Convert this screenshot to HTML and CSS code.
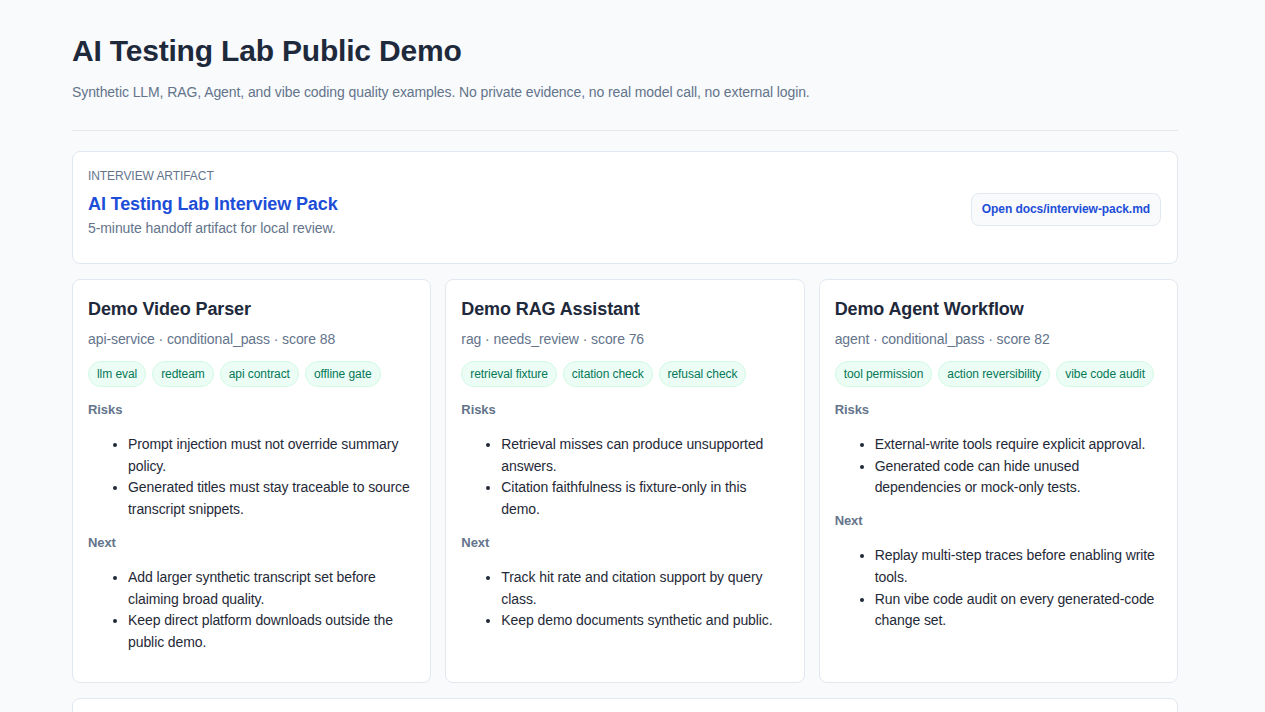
FILE: index.html
```html
<!DOCTYPE html>
<html lang="en">
<head>
<meta charset="utf-8" />
<title>AI Testing Lab Public Demo</title>
<meta name="viewport" content="width=device-width, initial-scale=1" />
<link rel="stylesheet" href="styles.css">
</head>
<body>
<main class="page">

<header class="intro">
    <h1>AI Testing Lab Public Demo</h1>
    <p class="lead">Synthetic LLM, RAG, Agent, and vibe coding quality examples. No private evidence, no real model call, no external login.</p>
</header>

<!-- artifact: -->
<section class="artifact">
    <div>
        <div class="eyebrow">INTERVIEW ARTIFACT</div>
        <a class="artifact-title" href="#">AI Testing Lab Interview Pack</a>
        <p class="artifact-desc">5-minute handoff artifact for local review.</p>
    </div>
    <a class="btn" href="#">Open docs/interview-pack.md</a>
</section>

<!-- demo cards: -->
<section class="cards">
    <article class="card">
        <h2>Demo Video Parser</h2>
        <p class="meta">api-service &middot; conditional_pass &middot; score 88</p>
        <div class="tags">
            <span class="tag">llm eval</span>
            <span class="tag">redteam</span>
            <span class="tag">api contract</span>
            <span class="tag">offline gate</span>
        </div>
        <h3>Risks</h3>
        <ul>
            <li>Prompt injection must not override summary policy.</li>
            <li>Generated titles must stay traceable to source transcript snippets.</li>
        </ul>
        <h3>Next</h3>
        <ul>
            <li>Add larger synthetic transcript set before claiming broad quality.</li>
            <li>Keep direct platform downloads outside the public demo.</li>
        </ul>
    </article>

    <article class="card">
        <h2>Demo RAG Assistant</h2>
        <p class="meta">rag &middot; needs_review &middot; score 76</p>
        <div class="tags">
            <span class="tag">retrieval fixture</span>
            <span class="tag">citation check</span>
            <span class="tag">refusal check</span>
        </div>
        <h3>Risks</h3>
        <ul>
            <li>Retrieval misses can produce unsupported answers.</li>
            <li>Citation faithfulness is fixture-only in this demo.</li>
        </ul>
        <h3>Next</h3>
        <ul>
            <li>Track hit rate and citation support by query class.</li>
            <li>Keep demo documents synthetic and public.</li>
        </ul>
    </article>

    <article class="card">
        <h2>Demo Agent Workflow</h2>
        <p class="meta">agent &middot; conditional_pass &middot; score 82</p>
        <div class="tags">
            <span class="tag">tool permission</span>
            <span class="tag">action reversibility</span>
            <span class="tag">vibe code audit</span>
        </div>
        <h3>Risks</h3>
        <ul>
            <li>External-write tools require explicit approval.</li>
            <li>Generated code can hide unused dependencies or mock-only tests.</li>
        </ul>
        <h3>Next</h3>
        <ul>
            <li>Replay multi-step traces before enabling write tools.</li>
            <li>Run vibe code audit on every generated-code change set.</li>
        </ul>
    </article>
</section>

<!-- gate summary: -->
<section class="panel">
    <h2>Release Gate Summary</h2>
    <p class="meta">All examples are synthetic and run offline.</p>
    <ul>
        <li>Demo Video Parser: conditional_pass</li>
        <li>Demo RAG Assistant: needs_review</li>
        <li>Demo Agent Workflow: conditional_pass</li>
    </ul>
</section>

</main>
</body>
</html>
```

FILE: styles.css
```css
html, body {
    margin: 0;
    background: #f8fafc;
    color: #1f2937;
    font-family: "Liberation Sans", Arial, sans-serif;
}
body {
    padding-right: 15px;
}

.page {
    max-width: 1106px;
    margin: 0 auto;
    padding: 33px 0 40px 0;
}

/* intro: */
.intro {
    border-bottom: 1px solid #e5e7eb;
    padding-bottom: 28px;
    margin-bottom: 20px;
}
.intro h1 {
    margin: 0;
    font-size: 30px;
    line-height: 36px;
    letter-spacing: -0.19px;
    color: #1e293b;
}
.lead {
    margin: 13px 0 0 0;
    font-size: 14px;
    line-height: 20px;
    letter-spacing: -0.085px;
    color: #64748b;
}

/* artifact: */
.artifact {
    display: flex;
    align-items: center;
    justify-content: space-between;
    background: #fff;
    border: 1px solid #e2e8f0;
    border-radius: 8px;
    padding: 16px 16px 16px 15px;
    margin-bottom: 15px;
}
.eyebrow {
    font-size: 12px;
    line-height: 16px;
    letter-spacing: -0.07px;
    color: #64748b;
}
.artifact-title {
    display: block;
    margin-top: 8px;
    font-size: 18px;
    line-height: 24px;
    letter-spacing: -0.11px;
    font-weight: bold;
    color: #1d4ed8;
    text-decoration: none;
}
.artifact-desc {
    margin: 2px 0 9px 0;
    font-size: 14px;
    line-height: 20px;
    letter-spacing: -0.085px;
    color: #64748b;
}
.btn {
    margin-top: 3px;
    padding: 8px 10px;
    font-size: 12px;
    line-height: 15px;
    letter-spacing: -0.07px;
    font-weight: bold;
    color: #1d4ed8;
    background: #f8fafc;
    border: 1px solid #e2e8f0;
    border-radius: 8px;
    text-decoration: none;
}

/* cards: */
.cards {
    display: grid;
    grid-template-columns: repeat(3, 1fr);
    gap: 14px;
    margin-bottom: 15px;
}
.card, .panel {
    background: #fff;
    border: 1px solid #e2e8f0;
    border-radius: 8px;
    padding: 17px 15px 15px 15px;
}
.card h2, .panel h2 {
    margin: 0;
    font-size: 18px;
    line-height: 24px;
    letter-spacing: -0.11px;
    color: #1e293b;
}
.meta {
    margin: 8px 0 0 0;
    font-size: 14px;
    line-height: 20px;
    letter-spacing: -0.085px;
    color: #64748b;
}
.tags {
    display: flex;
    flex-wrap: wrap;
    gap: 6px;
    margin-top: 12px;
}
.tag {
    padding: 4px 8px;
    font-size: 12px;
    line-height: 16px;
    letter-spacing: -0.07px;
    color: #047857;
    background: #ecfdf5;
    border: 1px solid #d1fae5;
    border-radius: 999px;
}
.card h3 {
    margin: 14px 0 0 0;
    font-size: 13px;
    line-height: 18px;
    letter-spacing: -0.08px;
    color: #64748b;
}
.card ul + h3 {
    margin-top: 13px;
}
.card ul, .panel ul {
    margin: 15px 0 13px 0;
    padding-left: 40px;
    font-size: 14px;
    line-height: 21.7px;
    letter-spacing: -0.085px;
    color: #1f2937;
}
.panel {
    padding-bottom: 60px;
}
```
